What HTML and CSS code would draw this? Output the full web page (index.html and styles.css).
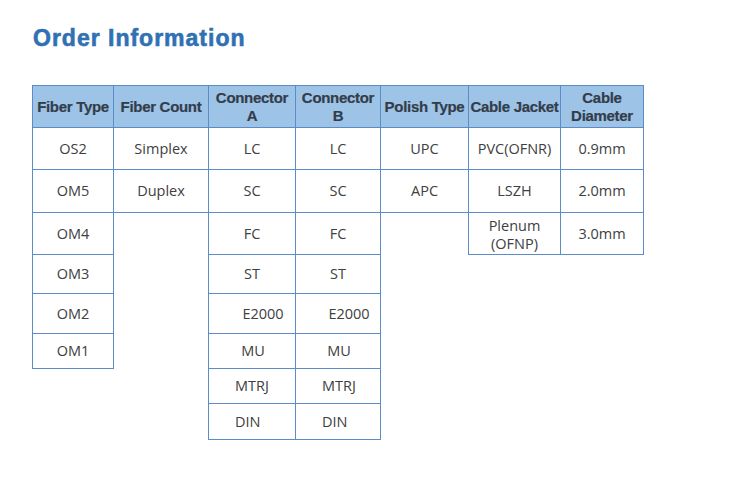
FILE: index.html
```html
<!DOCTYPE html>
<html>
<head>
<meta charset="utf-8">
<link rel="stylesheet" href="styles.css">
</head>
<body>
<div class="page">
  <h1 class="title">Order Information</h1>
  <div class="grid">
    <div class="cell head">Fiber Type</div>
    <div class="cell head">Fiber Count</div>
    <div class="cell head">Connector<br>A</div>
    <div class="cell head">Connector<br>B</div>
    <div class="cell head">Polish Type</div>
    <div class="cell head">Cable Jacket</div>
    <div class="cell head last">Cable<br>Diameter</div>

    <div class="cell">OS2</div>
    <div class="cell">Simplex</div>
    <div class="cell">LC</div>
    <div class="cell">LC</div>
    <div class="cell">UPC</div>
    <div class="cell">PVC(OFNR)</div>
    <div class="cell last">0.9mm</div>

    <div class="cell">OM5</div>
    <div class="cell">Duplex</div>
    <div class="cell">SC</div>
    <div class="cell">SC</div>
    <div class="cell">APC</div>
    <div class="cell">LSZH</div>
    <div class="cell last">2.0mm</div>

    <div class="cell">OM4</div>
    <div class="fill fill-count"></div>
    <div class="cell">FC</div>
    <div class="cell">FC</div>
    <div class="fill fill-polish"></div>
    <div class="cell two">Plenum<br>(OFNP)</div>
    <div class="cell last">3.0mm</div>

    <div class="cell">OM3</div>
    <div class="cell">ST</div>
    <div class="cell">ST</div>
    <div class="blank"></div>
    <div class="blank"></div>

    <div class="cell">OM2</div>
    <div class="cell e2k">E2000</div>
    <div class="cell e2k">E2000</div>
    <div class="blank"></div>
    <div class="blank"></div>

    <div class="cell">OM1</div>
    <div class="cell mu">MU</div>
    <div class="cell mu">MU</div>
    <div class="blank"></div>
    <div class="blank"></div>

    <div class="blank"></div>
    <div class="blank"></div>
    <div class="cell left">MTRJ</div>
    <div class="cell left">MTRJ</div>
    <div class="blank"></div>
    <div class="blank"></div>

    <div class="blank"></div>
    <div class="blank"></div>
    <div class="cell left">DIN</div>
    <div class="cell left">DIN</div>
    <div class="blank"></div>
    <div class="blank"></div>
  </div>
</div>
</body>
</html>
```
FILE: styles.css
```css
html, body {
  margin: 0;
  padding: 0;
  background: #ffffff;
}

.page {
  padding: 24px 0 0 32px;
}

.title {
  margin: 0 0 33px 1px;
  font-family: "Liberation Sans", Arial, sans-serif;
  font-weight: bold;
  font-size: 23px;
  line-height: 28px;
  letter-spacing: 1px;
  color: #2f71b3;
  -webkit-text-stroke: 0.6px #2f71b3;
}

.grid {
  display: grid;
  grid-template-columns: 81px 95px 87px 85px 88px 92px 84px;
  grid-template-rows: 43px 42px 43px 42px 39px 40px 35px 35px 36px;
  width: max-content;
}

.cell {
  box-sizing: border-box;
  border-left: 1px solid #5b8bc9;
  border-bottom: 1px solid #5b8bc9;
  display: flex;
  align-items: center;
  justify-content: center;
  text-align: center;
  font-family: "Open Sans", "Noto Sans", sans-serif;
  font-size: 14.5px;
  color: #404040;
  line-height: 18px;
}

.cell.last {
  border-right: 1px solid #5b8bc9;
}

.cell.head {
  border-top: 1px solid #5b8bc9;
  background: #9dc3e6;
  font-family: "Liberation Sans", Arial, sans-serif;
  font-weight: bold;
  font-size: 15px;
  line-height: 18px;
  color: #333d4a;
  letter-spacing: -0.3px;
  white-space: nowrap;
  -webkit-text-stroke: 0.2px #333d4a;
}

.cell.two {
  line-height: 18px;
  padding-top: 2px;
}

.cell.e2k {
  padding-left: 22px;
}

.cell.mu {
  padding-left: 2px;
}

.cell.left {
  justify-content: flex-start;
  padding-left: 26px;
}

.fill {
  box-sizing: border-box;
  border-left: 1px solid #5b8bc9;
}

.fill-count {
  grid-row: span 4;
}

.fill-polish {
  grid-row: span 6;
}

.blank {
  min-height: 0;
}
```
